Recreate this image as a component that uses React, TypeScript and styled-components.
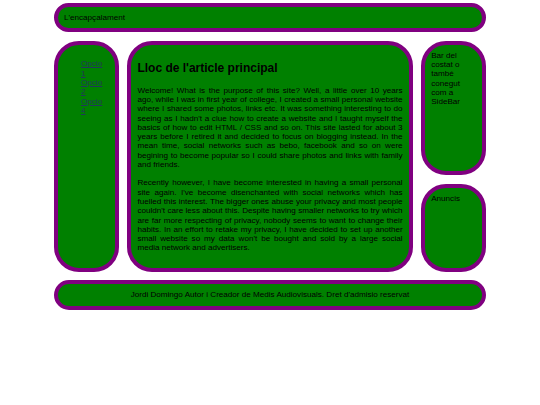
import React from 'react'
import styled, { createGlobalStyle } from 'styled-components'

const GlobalStyle = createGlobalStyle`
  html, body {
    margin: 0;
    padding: 0;
    background: #ffffff;
  }
  body {
    font-family: "Liberation Sans", Arial, sans-serif;
    font-size: 8.1px;
    line-height: 9.3px;
    color: #000000;
  }
`

const Page = styled.div`
  width: 432px;
  margin: 0 auto;
  padding-top: 3px;
  display: grid;
  grid-template-columns: 64.8px 1fr 64.8px;
  grid-template-rows: auto auto auto auto;
  gap: 8.6px;
`

const Box = styled.div`
  background: #008000;
  border: 4px solid #800080;
  padding: 6px;
`

const Header = styled(Box).attrs({ as: 'header' })`
  grid-column: 1 / -1;
  grid-row: 1;
  border-radius: 15px;
`

const Footer = styled(Box).attrs({ as: 'footer' })`
  grid-column: 1 / -1;
  grid-row: 4;
  border-radius: 15px;
  text-align: center;
`

const Nav = styled(Box).attrs({ as: 'nav' })`
  grid-column: 1;
  grid-row: 2 / 4;
  border-radius: 25px;
`

const Main = styled(Box).attrs({ as: 'main' })`
  grid-column: 2;
  grid-row: 2 / 4;
  border-radius: 25px;
`

const Side = styled(Box).attrs({ as: 'aside' })<{ $row: number }>`
  grid-column: 3;
  grid-row: ${(p) => p.$row};
  border-radius: 25px;
`

const Menu = styled.ul`
  list-style: none;
  margin: 8.5px 0;
  padding: 0 6px 0 17px;
`

const MenuLink = styled.a`
  color: #22365c;
  text-decoration: underline;
`

const Title = styled.h2`
  font-size: 12px;
  line-height: 13.8px;
  font-weight: bold;
  margin: 11px 0 10px;
`

const Paragraph = styled.p`
  margin: 9px 0;
  text-align: justify;
`

const options = ['Opcio 1', 'Opcio 2', 'Opcio 4']

export default function App() {
  return (
    <>
      <GlobalStyle />
      <Page>
        <Header>L'encapçalament</Header>
        <Nav>
          <Menu>
            {options.map((o) => (
              <li key={o}>
                <MenuLink href="#">{o}</MenuLink>
              </li>
            ))}
          </Menu>
        </Nav>
        <Main>
          <Title>Lloc de l'article principal</Title>
          <Paragraph>
            Welcome! What is the purpose of this site? Well, a little over 10 years ago, while I was in first
            year of college, I created a small personal website where I shared some photos, links etc. It was
            something interesting to do seeing as I hadn't a clue how to create a website and I taught myself the
            basics of how to edit HTML / CSS and so on. This site lasted for about 3 years before I retired it and
            decided to focus on blogging instead. In the mean time, social networks such as bebo, facebook and so
            on were begining to become popular so I could share photos and links with family and friends.
          </Paragraph>
          <Paragraph>
            Recently however, I have become interested in having a small personal site again. I've become
            disenchanted with social networks which has fuelled this interest. The bigger ones abuse your privacy
            and most people couldn't care less about this. Despite having smaller networks to try which are far
            more respecting of privacy, nobody seems to want to change their habits. In an effort to retake my
            privacy, I have decided to set up another small website so my data won't be bought and sold by a large
            social media network and advertisers.
          </Paragraph>
        </Main>
        <Side $row={2}>Bar del costat o també conegut com a SideBar</Side>
        <Side $row={3}>Anuncis</Side>
        <Footer>Jordi Domingo Autor i Creador de Medis Audiovisuals. Dret d'admisio reservat</Footer>
      </Page>
    </>
  )
}
